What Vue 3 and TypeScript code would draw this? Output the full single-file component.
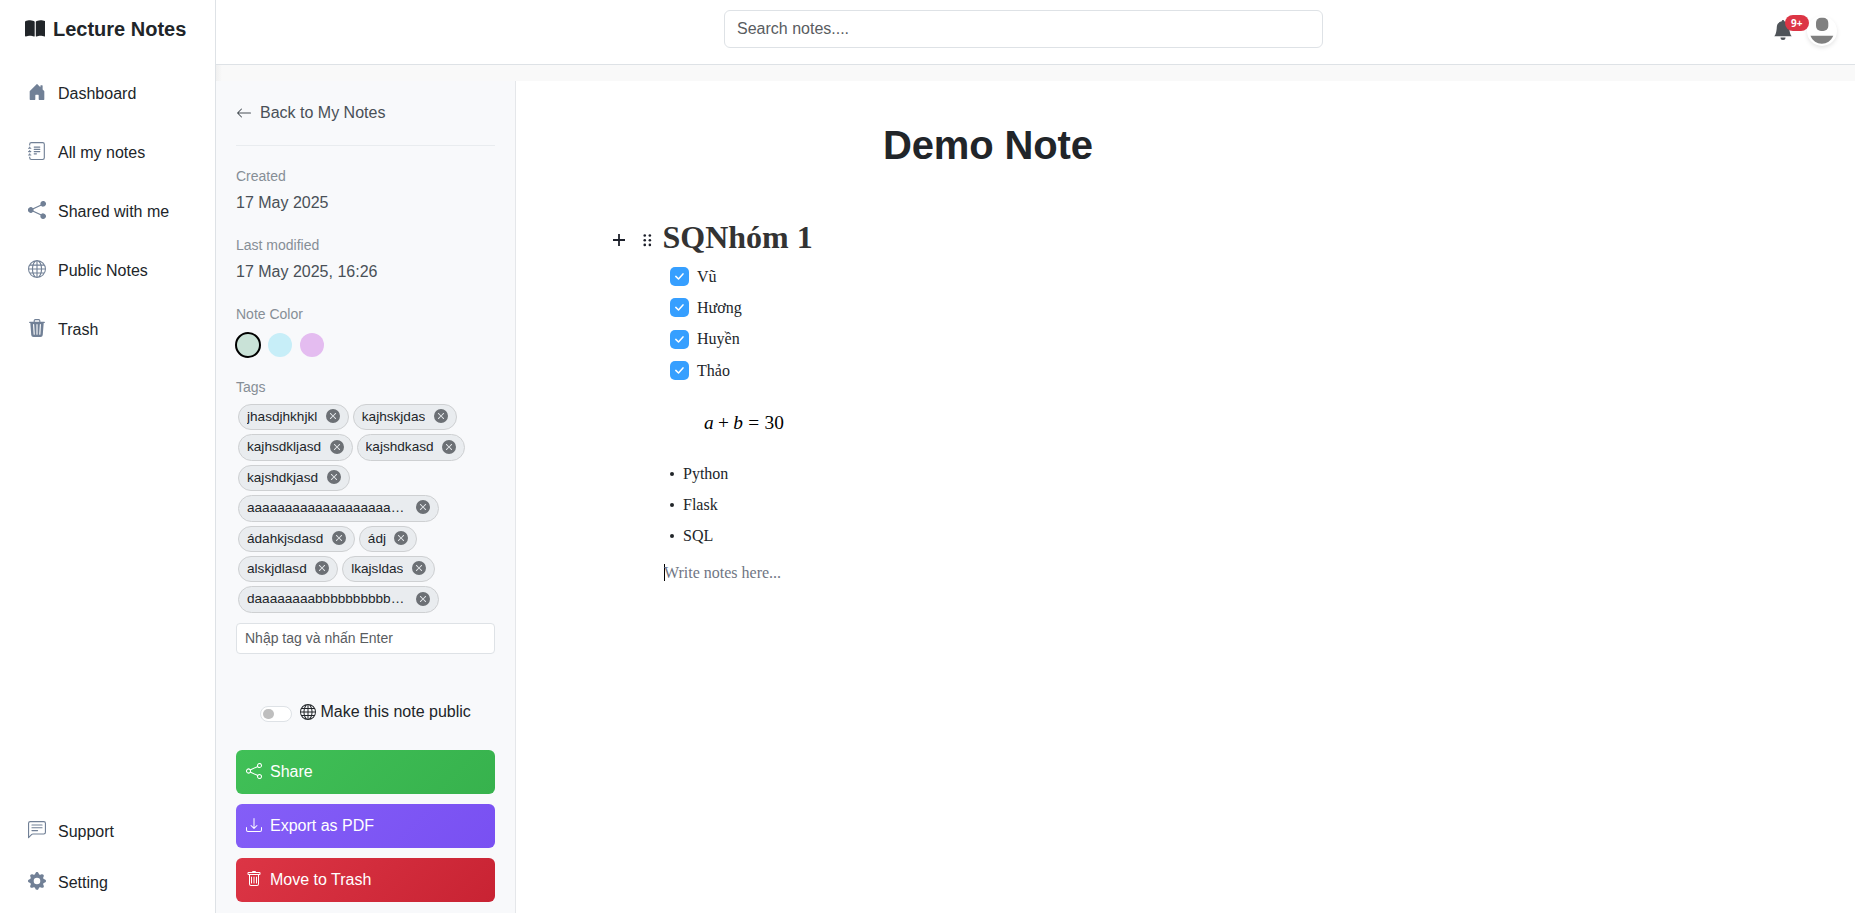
<script setup lang="ts">
import { ref } from 'vue'

interface NavItem {
  label: string
  icon: string
}

const icons: Record<string, string> = {
  house:
    'M6.5 14.5v-3.505c0-.245.25-.495.5-.495h2c.25 0 .5.25.5.5v3.5a.5.5 0 0 0 .5.5h4a.5.5 0 0 0 .5-.5v-7a.5.5 0 0 0-.146-.354L13 5.793V2.5a.5.5 0 0 0-.5-.5h-1a.5.5 0 0 0-.5.5v1.293L8.354 1.146a.5.5 0 0 0-.708 0l-6 6A.5.5 0 0 0 1.5 7.5v7a.5.5 0 0 0 .5.5h4a.5.5 0 0 0 .5-.5',
  journal:
    'M5 10.5a.5.5 0 0 1 .5-.5h2a.5.5 0 0 1 0 1h-2a.5.5 0 0 1-.5-.5m0-2a.5.5 0 0 1 .5-.5h5a.5.5 0 0 1 0 1h-5a.5.5 0 0 1-.5-.5m0-2a.5.5 0 0 1 .5-.5h5a.5.5 0 0 1 0 1h-5a.5.5 0 0 1-.5-.5m0-2a.5.5 0 0 1 .5-.5h5a.5.5 0 0 1 0 1h-5a.5.5 0 0 1-.5-.5M3 0h10a2 2 0 0 1 2 2v12a2 2 0 0 1-2 2H3a2 2 0 0 1-2-2v-1h1v1a1 1 0 0 0 1 1h10a1 1 0 0 0 1-1V2a1 1 0 0 0-1-1H3a1 1 0 0 0-1 1v1H1V2a2 2 0 0 1 2-2M1 5v-.5a.5.5 0 0 1 1 0V5h.5a.5.5 0 0 1 0 1h-2a.5.5 0 0 1 0-1zm0 3v-.5a.5.5 0 0 1 1 0V8h.5a.5.5 0 0 1 0 1h-2a.5.5 0 0 1 0-1zm0 3v-.5a.5.5 0 0 1 1 0v.5h.5a.5.5 0 0 1 0 1h-2a.5.5 0 0 1 0-1z',
  shareFill:
    'M11 2.5a2.5 2.5 0 1 1 .603 1.628l-6.718 3.12a2.5 2.5 0 0 1 0 1.504l6.718 3.12a2.5 2.5 0 1 1-.488.876l-6.718-3.12a2.5 2.5 0 1 1 0-3.256l6.718-3.12A2.5 2.5 0 0 1 11 2.5',
  share:
    'M13.5 1a1.5 1.5 0 1 0 0 3 1.5 1.5 0 0 0 0-3M11 2.5a2.5 2.5 0 1 1 .603 1.628l-6.718 3.12a2.5 2.5 0 0 1 0 1.504l6.718 3.12a2.5 2.5 0 1 1-.488.876l-6.718-3.12a2.5 2.5 0 1 1 0-3.256l6.718-3.12A2.5 2.5 0 0 1 11 2.5m-8.5 4a1.5 1.5 0 1 0 0 3 1.5 1.5 0 0 0 0-3m11 5.5a1.5 1.5 0 1 0 0 3 1.5 1.5 0 0 0 0-3',
  globe:
    'M0 8a8 8 0 1 1 16 0A8 8 0 0 1 0 8m7.5-6.923c-.67.204-1.335.82-1.887 1.855A8 8 0 0 0 5.145 4H7.5zM4.09 4a9.3 9.3 0 0 1 .64-1.539 7 7 0 0 1 .597-.933A7.03 7.03 0 0 0 2.255 4zm-.582 3.5c.03-.877.138-1.718.312-2.5H1.674a7 7 0 0 0-.656 2.5zM4.847 5a12.5 12.5 0 0 0-.338 2.5H7.5V5zM8.5 5v2.5h2.99a12.5 12.5 0 0 0-.337-2.5zM4.51 8.5a12.5 12.5 0 0 0 .337 2.5H7.5V8.5zm3.99 0V11h2.653c.187-.765.306-1.608.338-2.5zM5.145 12q.208.58.468 1.068c.552 1.035 1.218 1.65 1.887 1.855V12zm.182 2.472a7 7 0 0 1-.597-.933A9.3 9.3 0 0 1 4.09 12H2.255a7 7 0 0 0 3.072 2.472M3.82 11a13.7 13.7 0 0 1-.312-2.5h-2.49c.062.89.291 1.733.656 2.5zm6.853 3.472A7 7 0 0 0 13.745 12H11.91a9.3 9.3 0 0 1-.64 1.539 7 7 0 0 1-.597.933M8.5 12v2.923c.67-.204 1.335-.82 1.887-1.855q.26-.487.468-1.068zm3.68-1h2.146c.365-.767.594-1.61.656-2.5h-2.49a13.7 13.7 0 0 1-.312 2.5m2.802-3.5a7 7 0 0 0-.656-2.5H12.18c.174.782.282 1.623.312 2.5zM11.27 2.461c.247.464.462.98.64 1.539h1.835a7 7 0 0 0-3.072-2.472c.218.284.418.598.597.933M10.855 4a8 8 0 0 0-.468-1.068C9.835 1.897 9.17 1.282 8.5 1.077V4z',
  trashFill:
    'M11 1.5v1h3.5a.5.5 0 0 1 0 1h-.538l-.853 10.66A2 2 0 0 1 11.115 16h-6.23a2 2 0 0 1-1.994-1.84L2.038 3.5H1.5a.5.5 0 0 1 0-1H5v-1A1.5 1.5 0 0 1 6.5 0h3A1.5 1.5 0 0 1 11 1.5m-5 0v1h4v-1a.5.5 0 0 0-.5-.5h-3a.5.5 0 0 0-.5.5M4.5 5.029l.5 8.5a.5.5 0 1 0 .998-.06l-.5-8.5a.5.5 0 1 0-.998.06m6.53-.528a.5.5 0 0 0-.528.47l-.5 8.5a.5.5 0 0 0 .998.058l.5-8.5a.5.5 0 0 0-.47-.528M8 4.5a.5.5 0 0 0-.5.5v8.5a.5.5 0 0 0 1 0V5a.5.5 0 0 0-.5-.5',
  trash:
    'M5.5 5.5A.5.5 0 0 1 6 6v6a.5.5 0 0 1-1 0V6a.5.5 0 0 1 .5-.5m2.5 0a.5.5 0 0 1 .5.5v6a.5.5 0 0 1-1 0V6a.5.5 0 0 1 .5-.5m3 .5a.5.5 0 0 0-1 0v6a.5.5 0 0 0 1 0zM14.5 3a1 1 0 0 1-1 1H13v9a2 2 0 0 1-2 2H5a2 2 0 0 1-2-2V4h-.5a1 1 0 0 1-1-1V2a1 1 0 0 1 1-1H6a1 1 0 0 1 1-1h2a1 1 0 0 1 1 1h3.5a1 1 0 0 1 1 1zM4.118 4 4 4.059V13a1 1 0 0 0 1 1h6a1 1 0 0 0 1-1V4.059L11.882 4zM2.5 3h11V2h-11z',
  chat:
    'M14 1a1 1 0 0 1 1 1v8a1 1 0 0 1-1 1H4.414A2 2 0 0 0 3 11.586l-2 2V2a1 1 0 0 1 1-1zM2 0a2 2 0 0 0-2 2v12.793a.5.5 0 0 0 .854.353l2.853-2.853A1 1 0 0 1 4.414 12H14a2 2 0 0 0 2-2V2a2 2 0 0 0-2-2zM3 3.5a.5.5 0 0 1 .5-.5h9a.5.5 0 0 1 0 1h-9a.5.5 0 0 1-.5-.5M3 6a.5.5 0 0 1 .5-.5h9a.5.5 0 0 1 0 1h-9A.5.5 0 0 1 3 6m0 2.5a.5.5 0 0 1 .5-.5h5a.5.5 0 0 1 0 1h-5a.5.5 0 0 1-.5-.5',
  gear:
    'M9.405 1.05c-.413-1.4-2.397-1.4-2.81 0l-.1.34a1.464 1.464 0 0 1-2.105.872l-.31-.17c-1.283-.698-2.686.705-1.987 1.987l.169.311c.446.82.023 1.841-.872 2.105l-.34.1c-1.4.413-1.4 2.397 0 2.81l.34.1a1.464 1.464 0 0 1 .872 2.105l-.17.31c-.698 1.283.705 2.686 1.987 1.987l.311-.169a1.464 1.464 0 0 1 2.105.872l.1.34c.413 1.4 2.397 1.4 2.81 0l.1-.34a1.464 1.464 0 0 1 2.105-.872l.31.17c1.283.698 2.686-.705 1.987-1.987l-.169-.311a1.464 1.464 0 0 1 .872-2.105l.34-.1c1.4-.413 1.4-2.397 0-2.81l-.34-.1a1.464 1.464 0 0 1-.872-2.105l.17-.31c.698-1.283-.705-2.686-1.987-1.987l-.311.169a1.464 1.464 0 0 1-2.105-.872zM8 10.93a2.929 2.929 0 1 1 0-5.86 2.929 2.929 0 0 1 0 5.858z',
  arrowLeft:
    'M15 8a.5.5 0 0 0-.5-.5H2.707l3.147-3.146a.5.5 0 1 0-.708-.708l-4 4a.5.5 0 0 0 0 .708l4 4a.5.5 0 0 0 .708-.708L2.707 8.5H14.5A.5.5 0 0 0 15 8',
  download:
    'M.5 9.9a.5.5 0 0 1 .5.5v2.5a1 1 0 0 0 1 1h12a1 1 0 0 0 1-1v-2.5a.5.5 0 0 1 1 0v2.5a2 2 0 0 1-2 2H2a2 2 0 0 1-2-2v-2.5a.5.5 0 0 1 .5-.5M7.646 11.854a.5.5 0 0 0 .708 0l3-3a.5.5 0 0 0-.708-.708L8.5 10.293V1.5a.5.5 0 0 0-1 0v8.793L5.354 8.146a.5.5 0 1 0-.708.708z',
  bell:
    'M8 16a2 2 0 0 0 2-2H6a2 2 0 0 0 2 2m.995-14.901a1 1 0 1 0-1.99 0A5 5 0 0 0 3 6c0 1.098-.5 6-2 7h14c-1.5-1-2-5.902-2-7 0-2.42-1.72-4.44-4.005-4.901',
  close:
    'M16 8A8 8 0 1 1 0 8a8 8 0 0 1 16 0M5.354 4.646a.5.5 0 1 0-.708.708L7.293 8l-2.647 2.646a.5.5 0 0 0 .708.708L8 8.707l2.646 2.647a.5.5 0 0 0 .708-.708L8.707 8l2.647-2.646a.5.5 0 0 0-.708-.708L8 7.293z',
}

const mainNav: NavItem[] = [
  { label: 'Dashboard', icon: 'house' },
  { label: 'All my notes', icon: 'journal' },
  { label: 'Shared with me', icon: 'shareFill' },
  { label: 'Public Notes', icon: 'globe' },
  { label: 'Trash', icon: 'trashFill' },
]
const footNav: NavItem[] = [
  { label: 'Support', icon: 'chat' },
  { label: 'Setting', icon: 'gear' },
]

const colors = ['green', 'blue', 'purple']
const selectedColor = ref('green')

const tags = ref<string[]>([
  'jhasdjhkhjkl',
  'kajhskjdas',
  'kajhsdkljasd',
  'kajshdkasd',
  'kajshdkjasd',
  'aaaaaaaaaaaaaaaaaaaaaaaaaaaa',
  'ádahkjsdasd',
  'ádj',
  'alskjdlasd',
  'lkajsldas',
  'daaaaaaaabbbbbbbbbbbbbbbbbb',
])
const removeTag = (index: number) => tags.value.splice(index, 1)

const actions = [
  { label: 'Share', icon: 'share', kind: 'share' },
  { label: 'Export as PDF', icon: 'download', kind: 'export' },
  { label: 'Move to Trash', icon: 'trash', kind: 'trash' },
]

const checklist = ['Vũ', 'Hương', 'Huyền', 'Thảo']
const bullets = ['Python', 'Flask', 'SQL']
</script>

<template>
  <div class="app">
    <aside class="sidebar">
      <div class="brand">
        <svg class="brand-icon" viewBox="0 0 576 512" preserveAspectRatio="none">
          <path
            d="M249.6 471.5c10.8 3.8 22.4-4.1 22.4-15.5V78.6c0-4.2-1.6-8.4-5-11C247.4 52 202.4 32 144 32C93.5 32 46.3 45.3 18.1 56.1C6.8 60.5 0 71.7 0 83.8V454.1c0 11.9 12.8 20.2 24.1 16.5C55.6 460.1 105.5 448 144 448c33.9 0 79 14 105.6 23.5zm76.8 0C353 462 398.1 448 432 448c38.5 0 88.4 12.1 119.9 22.6c11.3 3.8 24.1-4.6 24.1-16.5V83.8c0-12.1-6.8-23.3-18.1-27.6C529.7 45.3 482.5 32 432 32c-58.4 0-103.4 20-123 35.6c-3.3 2.6-5 6.8-5 11V456c0 11.4 11.7 19.3 22.4 15.5z"
          />
        </svg>
        <span>Lecture Notes</span>
      </div>
      <nav class="nav">
        <a v-for="item in mainNav" :key="item.label" class="nav-item">
          <svg viewBox="0 0 16 16"><path :d="icons[item.icon]" /></svg>
          <span>{{ item.label }}</span>
        </a>
      </nav>
      <nav class="nav nav-foot">
        <a v-for="item in footNav" :key="item.label" class="nav-item">
          <svg viewBox="0 0 16 16"><path :d="icons[item.icon]" /></svg>
          <span>{{ item.label }}</span>
        </a>
      </nav>
    </aside>

    <div class="page">
      <header class="topbar">
        <input class="search" type="text" placeholder="Search notes...." />
        <div class="account">
          <div class="bell">
            <svg viewBox="0 0 16 16"><path :d="icons.bell" /></svg>
            <span class="badge">9+</span>
          </div>
          <div class="avatar">
            <svg viewBox="0 0 30 30">
              <rect x="9" y="1.8" width="12.3" height="13.2" rx="5" />
              <path d="M3.4 19.8H26.3C24 25 19.8 27.8 14.8 27.8S5.7 25 3.4 19.8z" />
            </svg>
          </div>
        </div>
      </header>

      <div class="workspace">
        <section class="details">
          <a class="back">
            <svg viewBox="0 0 16 16"><path :d="icons.arrowLeft" /></svg>
            <span>Back to My Notes</span>
          </a>

          <div class="meta">
            <div class="label">Created</div>
            <div class="value">17 May 2025</div>
          </div>
          <div class="meta">
            <div class="label">Last modified</div>
            <div class="value">17 May 2025, 16:26</div>
          </div>
          <div class="label">Note Color</div>
          <div class="swatches">
            <button
              v-for="c in colors"
              :key="c"
              class="swatch"
              :class="[c, { selected: c === selectedColor }]"
              :aria-label="c"
              @click="selectedColor = c"
            ></button>
          </div>

          <div class="label">Tags</div>
          <div class="tags">
            <span v-for="(tag, i) in tags" :key="tag" class="tag">
              <span class="tag-text">{{ tag }}</span>
              <svg viewBox="0 0 16 16" @click="removeTag(i)"><path :d="icons.close" /></svg>
            </span>
          </div>
          <input class="tag-input" type="text" placeholder="Nhập tag và nhấn Enter" />

          <div class="public">
            <span class="switch"><span class="knob"></span></span>
            <svg viewBox="0 0 16 16"><path :d="icons.globe" /></svg>
            <span>Make this note public</span>
          </div>

          <div class="actions">
            <button v-for="a in actions" :key="a.kind" class="action" :class="a.kind">
              <svg viewBox="0 0 16 16"><path :d="icons[a.icon]" /></svg>
              <span>{{ a.label }}</span>
            </button>
          </div>
        </section>

        <main class="note">
          <h1 class="title">Demo Note</h1>
          <div class="editor">
            <div class="heading-row">
              <svg class="plus" viewBox="0 0 12 12"><path d="M6 0v12M0 6h12" /></svg>
              <svg class="grip" viewBox="0 0 9 13">
                <circle v-for="n in 6" :key="n" :cx="n % 2 ? 1.75 : 6.85" :cy="1.5 + Math.floor((n - 1) / 2) * 4.7" r="1.3" />
              </svg>
              <h2>SQNhóm 1</h2>
            </div>
            <ul class="checklist">
              <li v-for="c in checklist" :key="c">
                <span class="check">
                  <svg viewBox="0 0 19 19"><path d="M5.8 9.4L8.5 12L13 6.9" /></svg>
                </span>
                <span>{{ c }}</span>
              </li>
            </ul>
            <div class="formula"><i>a</i><span class="op">+</span><i>b</i><span class="op rel">=</span>30</div>
            <ul class="bullets">
              <li v-for="b in bullets" :key="b"><span class="dot"></span>{{ b }}</li>
            </ul>
            <div class="draft"><span class="caret"></span>Write notes here...</div>
          </div>
        </main>
      </div>
    </div>
  </div>
</template>

<style>
body {
  margin: 0;
  overflow: hidden;
  background: #f8f9fa;
}
</style>

<style scoped>
* {
  box-sizing: border-box;
}
.app {
  display: flex;
  width: 100%;
  height: 913px;
  font-family: 'Liberation Sans', Arial, sans-serif;
  font-size: 16px;
  line-height: 24px;
  color: #212529;
  overflow: hidden;
}
svg {
  display: block;
  flex: none;
  fill: currentColor;
}
h1,
h2,
ul {
  margin: 0;
  padding: 0;
}
li {
  list-style: none;
}
button,
input {
  font-family: inherit;
}

/* Sidebar */
.sidebar {
  display: flex;
  flex-direction: column;
  flex: none;
  width: 216px;
  border-right: 1px solid #dee2e6;
  background: #fff;
}
.brand {
  display: flex;
  align-items: center;
  gap: 8px;
  height: 58px;
  padding: 0 0 0 24.5px;
  font-size: 20px;
  font-weight: 700;
  white-space: nowrap;
}
.brand-icon {
  width: 20.5px;
  height: 19px;
  margin-top: -1px;
}
.nav {
  display: flex;
  flex-direction: column;
  gap: 11px;
  padding: 12px 0 0 28px;
}
.nav-item {
  display: flex;
  align-items: center;
  gap: 12px;
  height: 48px;
}
.nav-item svg {
  width: 18px;
  height: 18px;
  margin-top: -4px;
  color: #718096;
}
.nav-foot {
  gap: 3px;
  margin-top: auto;
  padding: 0 0 6px 28px;
}

/* Top bar */
.page {
  display: flex;
  flex: 1;
  flex-direction: column;
  min-width: 0;
}
.topbar {
  display: grid;
  grid-template-columns: 490px 599px 1fr;
  flex: none;
  height: 65px;
  padding: 10px 18px 0;
  border-bottom: 1px solid #dee2e6;
  background: #fff;
}
.search {
  grid-column: 2;
  height: 38px;
  padding: 6px 12px;
  border: 1px solid #dee2e6;
  border-radius: 6px;
  background: #fff;
  font-size: 16px;
  line-height: 24px;
}
.search::placeholder,
.tag-input::placeholder {
  color: #595c5f;
  opacity: 1;
}
.account {
  display: flex;
  justify-content: flex-end;
  align-items: flex-start;
  gap: 14px;
}
.bell {
  position: relative;
  margin-top: 10px;
  color: #4f5459;
}
.bell svg {
  width: 20px;
  height: 20px;
}
.badge {
  position: absolute;
  top: -5px;
  left: 12px;
  width: 23.5px;
  height: 16px;
  border-radius: 8px;
  background: #dc3545;
  color: #fff;
  font-family: 'Open Sans', sans-serif;
  font-size: 10px;
  font-weight: 700;
  line-height: 16px;
  text-align: center;
}
.avatar {
  width: 30px;
  height: 30px;
  margin-top: 6px;
  border-radius: 50%;
  background: #fff;
  box-shadow: 0 2px 4px rgba(0, 0, 0, 0.1);
  color: #808080;
}

/* Note details panel */
.workspace {
  display: flex;
  flex: 1;
  min-height: 0;
  padding-top: 16px;
  background: linear-gradient(to right, #f0f0f0, #f9f9f9 6px);
}
.details {
  flex: none;
  width: 300px;
  padding: 20px 20px 0;
  border-right: 1px solid #e5e7ea;
  background: #f8f9fb;
}
.back {
  display: flex;
  align-items: center;
  gap: 8px;
  box-sizing: content-box;
  height: 24px;
  margin-bottom: 20px;
  padding-bottom: 20px;
  border-bottom: 1px solid #e9ecef;
  color: #495057;
}
.back svg {
  width: 16px;
  height: 16px;
  margin-top: -1px;
}
.label {
  font-size: 14px;
  line-height: 21px;
  color: #868e96;
}
.meta {
  margin-bottom: 20px;
}
.meta .value {
  margin-top: 4px;
  color: #495057;
}
.swatches {
  display: flex;
  gap: 8px;
  margin: 8px 0 20px;
}
.swatch {
  width: 24px;
  height: 24px;
  padding: 0;
  border: 0;
  border-radius: 50%;
}
.swatch.green {
  background: #c9e2d7;
}
.swatch.blue {
  background: #c7eef8;
}
.swatch.purple {
  background: #e4bcf0;
}
.swatch.selected {
  width: 26px;
  height: 26px;
  margin: -1px;
  border: 2px solid #000;
}
.tags {
  display: flex;
  flex-wrap: wrap;
  gap: 4px;
  padding: 6px 2px 0;
}
.tag {
  display: flex;
  align-items: center;
  gap: 8.5px;
  height: 26.4px;
  padding: 0 8px;
  border: 1px solid #ced0d2;
  border-radius: 14px;
  background: #e9ecef;
  font-size: 13.6px;
  line-height: 20.4px;
}
.tag-text {
  max-width: 160px;
  overflow: hidden;
  text-overflow: ellipsis;
  white-space: nowrap;
}
.tag svg {
  width: 14px;
  height: 14px;
  margin-top: -2px;
  color: #6c7075;
}
.tag-input {
  display: block;
  width: 100%;
  height: 31px;
  margin-top: 10.2px;
  padding: 4px 8px;
  border: 1px solid #dee2e6;
  border-radius: 4px;
  background: #fff;
  font-size: 14px;
}
.public {
  display: flex;
  align-items: center;
  height: 24px;
  margin: 46px 0 0 24px;
}
.switch {
  display: flex;
  align-items: center;
  width: 32px;
  height: 16px;
  margin: 4px 8px 0 0;
  padding-left: 2px;
  border: 1px solid #dee2e6;
  border-radius: 8px;
  background: #fff;
}
.knob {
  width: 10.6px;
  height: 10.6px;
  border-radius: 50%;
  background: #bfbfbf;
}
.public svg {
  width: 16px;
  height: 16px;
  margin-right: 4.5px;
}
.actions {
  display: flex;
  flex-direction: column;
  gap: 10px;
  margin-top: 26px;
}
.action {
  display: flex;
  align-items: center;
  gap: 8px;
  height: 44px;
  padding: 0 10px;
  border: 0;
  border-radius: 6px;
  color: #fff;
  font-size: 16px;
}
.action svg {
  width: 16px;
  height: 16px;
  margin-top: -2px;
}
.action.share {
  background: linear-gradient(135deg, #40c057, #37b24d);
}
.action.export {
  background: linear-gradient(135deg, #845ef7, #7950f2);
}
.action.trash {
  background: linear-gradient(135deg, #dc3545, #c82333);
}

/* Note body */
.note {
  flex: 1;
  min-width: 0;
  background: #fff;
}
.title {
  padding: 40px 0 0 367px;
  font-size: 40px;
  line-height: 48px;
  letter-spacing: -0.15px;
}
.editor {
  width: 650px;
  margin-left: 148px;
  padding-top: 47px;
  font-family: 'Liberation Serif', 'Times New Roman', serif;
}
.heading-row {
  display: flex;
  align-items: center;
  height: 42px;
  margin-left: -51px;
}
.heading-row h2 {
  margin-left: 11px;
  color: #333;
  font-size: 32px;
  line-height: 42px;
}
.plus {
  width: 12px;
  height: 12px;
  margin: 6px 17.5px 0 0;
  stroke: #1d202b;
  stroke-width: 1.8;
}
.grip {
  width: 9px;
  height: 13px;
  margin-top: 6px;
  color: #1d202b;
}
.checklist {
  padding: 3px 0 0 6px;
}
.checklist li {
  display: flex;
  align-items: center;
  gap: 8px;
  height: 31.3px;
}
.check {
  width: 19px;
  height: 19px;
  border-radius: 5px;
  background: #369fff;
}
.check svg {
  fill: none;
  stroke: #fff;
  stroke-width: 1.5;
  stroke-linecap: round;
  stroke-linejoin: round;
}
.formula {
  height: 67px;
  padding-left: 40px;
  color: #000;
  font-size: 19.36px;
  line-height: 73px;
}
.op {
  margin: 0 4.3px;
}
.op.rel {
  margin: 0 5.4px;
}
.bullets {
  padding: 5px 0 0 6px;
}
.bullets li {
  display: flex;
  align-items: center;
  height: 31px;
}
.dot {
  width: 4px;
  height: 4px;
  margin: 0 9px 0 0;
  border-radius: 50%;
  background: #212529;
}
.draft {
  display: flex;
  align-items: center;
  height: 43px;
  color: #707684;
}
.caret {
  width: 1px;
  height: 17px;
  margin-right: -1px;
  background: #000;
}
</style>
